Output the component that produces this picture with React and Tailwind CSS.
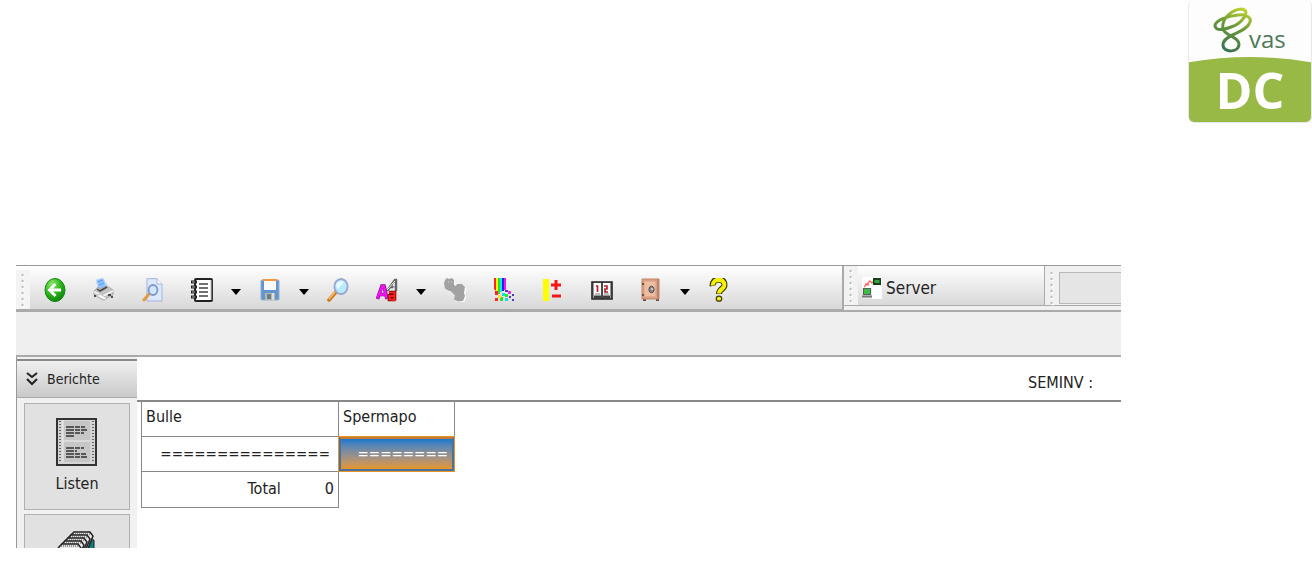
import React from 'react';

const Svg = ({ children, className = 'h-6 w-[22px]', box = '0 0 22 24' }) => (
  <svg aria-hidden="true" viewBox={box} preserveAspectRatio="none" className={className + ' shrink-0'}>{children}</svg>
);

const BackIcon = () => (
  <Svg>
    <defs><radialGradient id="back" cx=".35" cy=".25" r=".85"><stop offset="0" stopColor="#8bea68" /><stop offset=".5" stopColor="#32b51f" /><stop offset="1" stopColor="#087d08" /></radialGradient></defs>
    <ellipse cx="11" cy="12" rx="10" ry="11.5" fill="url(#back)" stroke="#16850f" />
    <path d="M17 12H6M11.5 6L5.5 12l6 6" fill="none" stroke="#fff" strokeWidth="2.8" />
  </Svg>
);
const PrinterIcon = () => (
  <Svg>
    <path d="M3 2L10 0l4 8-8 4z" fill="#8fc0fa" stroke="#c5dcf5" />
    <path d="M5 4l5-2M6 7l5-2" stroke="#5a9cf0" />
    <path d="M1 13l4-4 2 2 7-3 6 4v5l-10 5-9-5z" fill="#c3c3c3" stroke="#9a9a9a" strokeWidth=".7" />
    <path d="M1 14l9 4 10-5" fill="none" stroke="#f7f7f7" strokeWidth="1.5" />
    <path d="M4 11l3 2 7-4" fill="none" stroke="#444" strokeWidth="1.5" />
    <path d="M3 18l8 4 3-2-7-4z" fill="#f5f5f5" stroke="#aaa" strokeWidth=".7" />
    <path d="M15 17h3M18 19h2M1 18h2" stroke="#222" strokeWidth="1.5" />
  </Svg>
);
const PreviewIcon = () => (
  <Svg>
    <path d="M5 .7h10l5 5.3v17H5z" fill="#dce8fb" stroke="#a4b3dc" />
    <path d="M15 .7V6h5" fill="#fff" stroke="#a4b3dc" />
    <path d="M7 16L2 22" stroke="#e69a3d" strokeWidth="3" strokeLinecap="round" />
    <ellipse cx="11" cy="12" rx="4.4" ry="5" fill="#d2e7fc" stroke="#8197cb" strokeWidth="1.8" />
  </Svg>
);
const NotebookIcon = () => (
  <Svg>
    <rect x="4" y="1" width="17" height="22" rx="1" fill="#fff" stroke="#222" strokeWidth="2" />
    <path d="M20.5 2v20" stroke="#777" strokeWidth="1.4" />
    <path d="M8 6h9M8 10h9M8 14h9M8 18h9" stroke="#444" strokeWidth="1.5" />
    <path d="M0 4h6M0 9h6M0 14h6M0 19h6" stroke="#222" strokeWidth="3" />
    <path d="M1 4h3M1 9h3M1 14h3M1 19h3" stroke="#aaa" />
  </Svg>
);
const DiskIcon = () => (
  <Svg>
    <rect x="2" y="2" width="18" height="20" rx="1" fill="#6295cf" stroke="#91afd2" />
    <path d="M5 2h12v10H5z" fill="#fafafa" /><path d="M4 2h14" stroke="#ef9b43" strokeWidth="2" />
    <path d="M6 15h10v7H6z" fill="#b4b9b2" /><path d="M8 16h4v5H8z" fill="#707b85" /><path d="M13 15h2v7h-2z" fill="#ddd" />
  </Svg>
);
const SearchIcon = () => (
  <Svg>
    <path d="M9 14L2 22" stroke="#c77c29" strokeWidth="3.6" strokeLinecap="round" /><path d="M8 14l-6 7" stroke="#ffbc56" strokeWidth="1.6" />
    <ellipse cx="14" cy="8.5" rx="6.6" ry="7.5" fill="#b8ebff" stroke="#9aa8ce" strokeWidth="1.8" />
    <path d="M9 8c1-4 5-6 8-4l-6 7z" fill="#e8fcff" />
  </Svg>
);
const FontsIcon = () => (
  <Svg>
    <path d="M11 13L19 2h1v11M14 9h6" fill="none" stroke="#666" strokeWidth="2.4" /><path d="M11 12L19 3M18 5v6" stroke="#eee" />
    <path d="M1.5 21L6 8h2l3 13M4 16.5h6" fill="none" stroke="#73117a" strokeWidth="3.6" />
    <path d="M1.5 20.500L6.200 8h1.500l3 12.500M4 16.500h6" fill="none" stroke="#f012f0" strokeWidth="2.600" />
    <path d="M13 14.500h5.500v8M18 18h-4.500v3.500h4" fill="none" stroke="#6c0000" strokeWidth="3.600" />
    <path d="M13 14.500h5.500v9M18 18h-4.500v3.500h4" fill="none" stroke="#ff2020" strokeWidth="2" />
  </Svg>
);
const CowIcon = () => (
  <Svg>
    <g id="cow" fill="#fff" transform="translate(1.200 1.200)"><path d="M1 2l2-2 2 1 3-1 2 2v5l2 1 1-2h5l3 3-1 6 1 3-2 5-5 .5-4-2 1-4-4-4-3-1-3-2-1-5z" /></g>
    <path d="M1 2l2-2 2 1 3-1 2 2v5l2 1 1-2h5l3 3-1 6 1 3-2 5-5 .5-4-2 1-4-4-4-3-1-3-2-1-5z" fill="#a2a2a2" />
    <path d="M4 4h1M7 4h1" stroke="#ddd" />
  </Svg>
);
const ColorsIcon = () => (
  <Svg>
    <path d="M1 0h2v13l-2-2z" fill="#f22" /><path d="M3 0h2v14l-2-1z" fill="#ff0" /><path d="M5 0h2v15l-2-1z" fill="#27db27" /><path d="M7 0h2v14H7z" fill="#10e8ef" /><path d="M9 0h2v13H9z" fill="#2020f0" /><path d="M11 0h2v12h-2z" fill="#f017ef" />
    <path d="M2 13h3v4H2z" fill="#f22" /><path d="M7 19h3v4H7zM5 13h2v3H5z" fill="#2be329" /><path d="M5 17h3v3H5z" fill="#ffe21c" /><path d="M2 20h3v3H2z" fill="#f22" /><path d="M9 15h3v3H9zM12 20h3v3h-3z" fill="#16dde5" /><path d="M12 16h3v3h-3z" fill="#20f020" /><path d="M12 12h3v2h-3zM19 16h2v2h-2zM19 21h2v2h-2zM16 18h2v2h-2z" fill="#5537b8" /><path d="M15 13h3v3h-3z" fill="#e431e1" />
  </Svg>
);
const PlusMinusIcon = () => (
  <Svg><path d="M1 1h6v22H1z" fill="#ff0" /><path d="M9 7h10M14 2v10M10 18h9" stroke="#f51818" strokeWidth="3" /></Svg>
);
const BookIcon = () => (
  <Svg>
    <path d="M1 4h20v17H1z" fill="#999" stroke="#222" strokeWidth="1.600" /><path d="M3 5h7v12H3zM12 5h7v12h-7z" fill="#fff" /><path d="M11 4v17M3 19h7M12 19h7" stroke="#222" strokeWidth="1.300" />
    <path d="M5 8h1.500v6M13 8h3v3h-2v3h3" fill="none" stroke="#b5202d" strokeWidth="1.700" /><path d="M4 16h5M13 16h5" stroke="#777" />
  </Svg>
);
const SafeIcon = () => (
  <Svg>
    <path d="M3 21h3v2H3zM16 21h3v2h-3z" fill="#704b3c" /><path d="M2 1h17v20H2z" fill="#e0a384" stroke="#bd8469" /><path d="M17 1h2v20h-2z" fill="#c08569" /><path d="M4 3h12v16H4z" fill="#efbea1" stroke="#d19b80" />
    <ellipse cx="11.500" cy="11.500" rx="2.600" ry="3.300" fill="#878787" stroke="#55514f" /><circle cx="12" cy="11" r="1" fill="#ddd" /><path d="M3 5v2M3 16v2" stroke="#5b3b2b" strokeWidth="1.600" />
  </Svg>
);
const HelpIcon = () => (
  <Svg className="h-6 w-5">
    <path d="M4 8c-1-8 13-9 13-1 0 4-6 4-6 9" fill="none" stroke="#393900" strokeWidth="6.600" /><path d="M4 7.500c0-7 13-8 13-.5 0 4-6 4-6 8.500" fill="none" stroke="#f5ef0e" strokeWidth="4.400" />
    <ellipse cx="11" cy="20.700" rx="3" ry="2.500" fill="#f5ef0e" stroke="#393900" strokeWidth="1.300" />
  </Svg>
);
const ServerIcon = () => (
  <Svg className="h-[22px] w-5" box="0 0 20 22">
    <path d="M0 0h20v22H0z" fill="#fff" /><path d="M0 11h10v11H0z" fill="#e8e8e8" /><path d="M2 10L8 4l2 2 3-3M3 7l4 1" fill="none" stroke="#ff6262" strokeWidth="1.300" />
    <path d="M11 1h8v7h-8z" fill="#173f1a" /><path d="M12.500 3h5v3h-5z" fill="#31a63d" /><path d="M1 11h8v7H1z" fill="#54615c" /><path d="M2 12h6v5H2z" fill="#3cbc47" /><path d="M0 19.500h10" stroke="#777" strokeWidth="2" />
  </Svg>
);
const ListIcon = () => (
  <Svg className="h-12 w-[42px]" box="0 0 42 48">
    <path d="M1 1h39v46H1z" fill="#d5d5d5" stroke="#333" strokeWidth="2" /><path d="M4 3v41M37 3v41" stroke="#333" strokeDasharray="1 2" strokeWidth="1.400" /><path d="M7 3h27v41H7z" fill="#c6c6c6" /><path d="M7 23h27M7 2v42" stroke="#eee" />
    <path d="M10 9h19M10 12h21M10 15h18M10 18h9M10 30h18M10 33h11M10 36h20M10 39h21" stroke="#333" strokeWidth="1.600" strokeDasharray="8 1 5 1" />
  </Svg>
);
const CardsIcon = () => (
  <Svg className="h-12 w-10" box="0 0 40 48">
    <path d="M30 8l7 1v38H22z" fill="#087f7c" stroke="#222" />
    {[0, 1, 2, 3, 4].map((i) => (
      <g key={i} transform={`translate(${8 - i * 3} ${i * 3})`} fill="none">
        <path d="M0 14l6-10 3-3h16l3 4-6 15v28H0z" fill="#e5e5e5" stroke="#222" strokeWidth="1.500" />
        <path d="M8 3h17" stroke="#444" strokeDasharray="1 1" />
      </g>
    ))}
  </Svg>
);

const Grip = () => (
  <Svg className="mx-1 h-9 w-[6px]" box="0 0 7 36">
    {[3, 9, 15, 21, 27, 33].map((y) => <React.Fragment key={y}><circle cx="4" cy={y + 1} r="1.5" fill="#fff" /><circle cx="3" cy={y} r="1.3" fill="#bbb" /></React.Fragment>)}
  </Svg>
);

const tools = [
  ['Zurück', BackIcon], ['Drucken', PrinterIcon], ['Vorschau', PreviewIcon], ['Notizbuch', NotebookIcon, true],
  ['Speichern', DiskIcon, true], ['Suchen', SearchIcon], ['Schrift', FontsIcon, true], ['Tiere', CowIcon],
  ['Farben', ColorsIcon], ['Plus und Minus', PlusMinusIcon], ['Buch', BookIcon], ['Tresor', SafeIcon, true], ['Hilfe', HelpIcon],
];

const Logo = () => (
  <div className="flex h-[123px] w-[124px] flex-col overflow-hidden rounded-md border border-t-0 border-[#e8e8e8] bg-[#fdfdfd]">
    <div className="flex h-[57px] shrink-0 items-end pl-6">
      <Svg className="mb-1 h-[46px] w-10" box="0 0 40 46">
        <defs><linearGradient id="vas" gradientUnits="userSpaceOnUse" x1="32" y1="0" x2="14" y2="44"><stop stopColor="#c5d92e" /><stop offset=".45" stopColor="#6c9a38" /><stop offset="1" stopColor="#397452" /></linearGradient></defs>
        <g fill="none" stroke="url(#vas)" strokeWidth="3" strokeLinecap="round">
          <path d="M10 22C8 12 19 2 29 2c10 2-1 15-11 18C10 23 3 24 2 19c0-6 13-10 23-11 9-1 15 3 11 9-3 6-11 8-17 11" />
          <path d="M10 22c1 6 16 8 16 15 0 9-16 9-16 1 0-5 5-8 10-10" />
        </g>
      </Svg>
      <span className="-ml-1 mb-1 font-['Open_Sans',sans-serif] text-2xl leading-7 text-[#4e795a]">vas</span>
    </div>
    <div className="relative flex flex-1 items-center justify-center bg-[#99b947] font-['Open_Sans',sans-serif] text-[50px] font-bold leading-none text-white">
      <svg aria-hidden="true" viewBox="0 0 123 7" preserveAspectRatio="none" className="absolute inset-x-0 top-0 h-[6px] w-full"><path d="M0 0h123v6Q62-6 0 6z" fill="#fdfdfd" /></svg>
      DC
    </div>
  </div>
);

export default function App() {
  return (
    <div className="min-h-screen bg-white font-['DejaVu_Sans_Condensed','Noto_Sans',sans-serif] text-base leading-6 text-[#222]">
      <header className="flex h-[265px] items-start justify-end"><Logo /></header>
      <main className="mr-[191px] ml-4">
        <div className="flex h-[47px] items-start border-t border-b-2 border-t-[#999] border-b-[#aaa] bg-[#f0f0f0]">
          <div role="toolbar" aria-label="Werkzeuge" className="flex h-[45px] w-[828px] shrink-0 items-center border-r-2 border-b-2 border-[#aaa] bg-linear-to-b from-white to-[#d8d8d8] pt-1">
            <div className="flex h-full items-center bg-[#f4f4f4]"><Grip /></div>
            {tools.map(([name, Icon, menu]) => (
              <div key={name} className="flex h-9 items-center">
                <button aria-label={name} className="flex h-9 w-[49px] items-center justify-center"><Icon /></button>
                {menu && <button aria-label={name + ' Menü'} className="flex h-9 w-[19px] items-center justify-center pt-1"><Svg className="h-[6px] w-[10px]" box="0 0 10 7"><path d="M0 0h10L5 7z" fill="#000" /></Svg></button>}
              </div>
            ))}
          </div>
          <div className="flex h-10 w-[201px] shrink-0 items-center border-r border-b border-[#aaa] bg-linear-to-b from-white to-[#d8d8d8]">
            <div className="flex h-full items-center bg-[#f2f2f2]"><Grip /></div>
            <button className="ml-1 flex flex-1 items-center gap-1 pt-1 text-[17px]"><ServerIcon />Server</button>
          </div>
          <div className="flex h-10 flex-1 items-center border-b border-[#aaa] pt-1"><Grip /><div className="h-8 flex-1 border border-r-0 border-[#b8b8b8] bg-[#e5e5e5]" /></div>
        </div>
        <div className="h-[45px] border-b-2 border-[#aaa] bg-[#efefef]" />
        <div className="flex h-[191px] overflow-hidden">
          <aside className="w-[121px] shrink-0 border-l border-[#999] bg-[#f1f1f1]">
            <button className="mt-[2px] flex h-[39px] w-full items-center gap-2 border-t-2 border-b border-t-[#888] border-b-[#aaa] bg-linear-to-b from-[#f0f0f0] to-[#c9c9c9] pl-2 text-sm">
              <Svg className="h-[14px] w-[14px]" box="0 0 14 14"><path d="M2 1l5 4 5-4M2 7l5 5 5-5" fill="none" stroke="#222" strokeWidth="2" /></Svg>Berichte
            </button>
            <div className="flex flex-col gap-1 px-[7px] pt-[5px]">
              <button className="flex h-[107px] shrink-0 flex-col items-center gap-[6px] border border-[#b0b0b0] bg-[#e1e1e1] pt-[14px]"><ListIcon />Listen</button>
              <button aria-label="Karteien" className="flex h-[107px] shrink-0 flex-col items-center border border-[#b0b0b0] bg-[#e1e1e1] pt-4"><CardsIcon /></button>
            </div>
          </aside>
          <section className="min-w-0 flex-1">
            <div className="flex h-[45px] items-center justify-end border-b-2 border-[#888] pt-2 pr-7">SEMINV :</div>
            <table className="ml-1 table-fixed border-collapse">
              <colgroup><col className="w-[197px]" /><col className="w-[116px]" /></colgroup>
              <thead><tr className="h-[34px] text-left">
                <th className="border border-t-0 border-[#888] px-1 pt-0 pb-1 font-normal">Bulle</th>
                <th className="border border-t-0 border-[#888] px-1 pt-0 pb-1 font-normal">Spermapo</th>
              </tr></thead>
              <tbody>
                <tr className="h-[35px] text-right text-[15px]">
                  <td className="border border-[#888] px-2 py-0">===============</td>
                  <td className="border border-[#888] p-0"><div className="flex h-[34px] items-center justify-end border-2 border-x-[#4b70a0] border-t-[#c87935] border-b-[#4b70a0] bg-linear-to-b from-[#0878ce] to-[#e59522] pr-1 text-white outline outline-[#e59522]">========</div></td>
                </tr>
                <tr className="h-9 text-right">
                  <td className="border border-[#888] px-1 py-0"><div className="flex justify-end gap-11"><span>Total</span><span>0</span></div></td>
                </tr>
              </tbody>
            </table>
          </section>
        </div>
      </main>
    </div>
  );
}
